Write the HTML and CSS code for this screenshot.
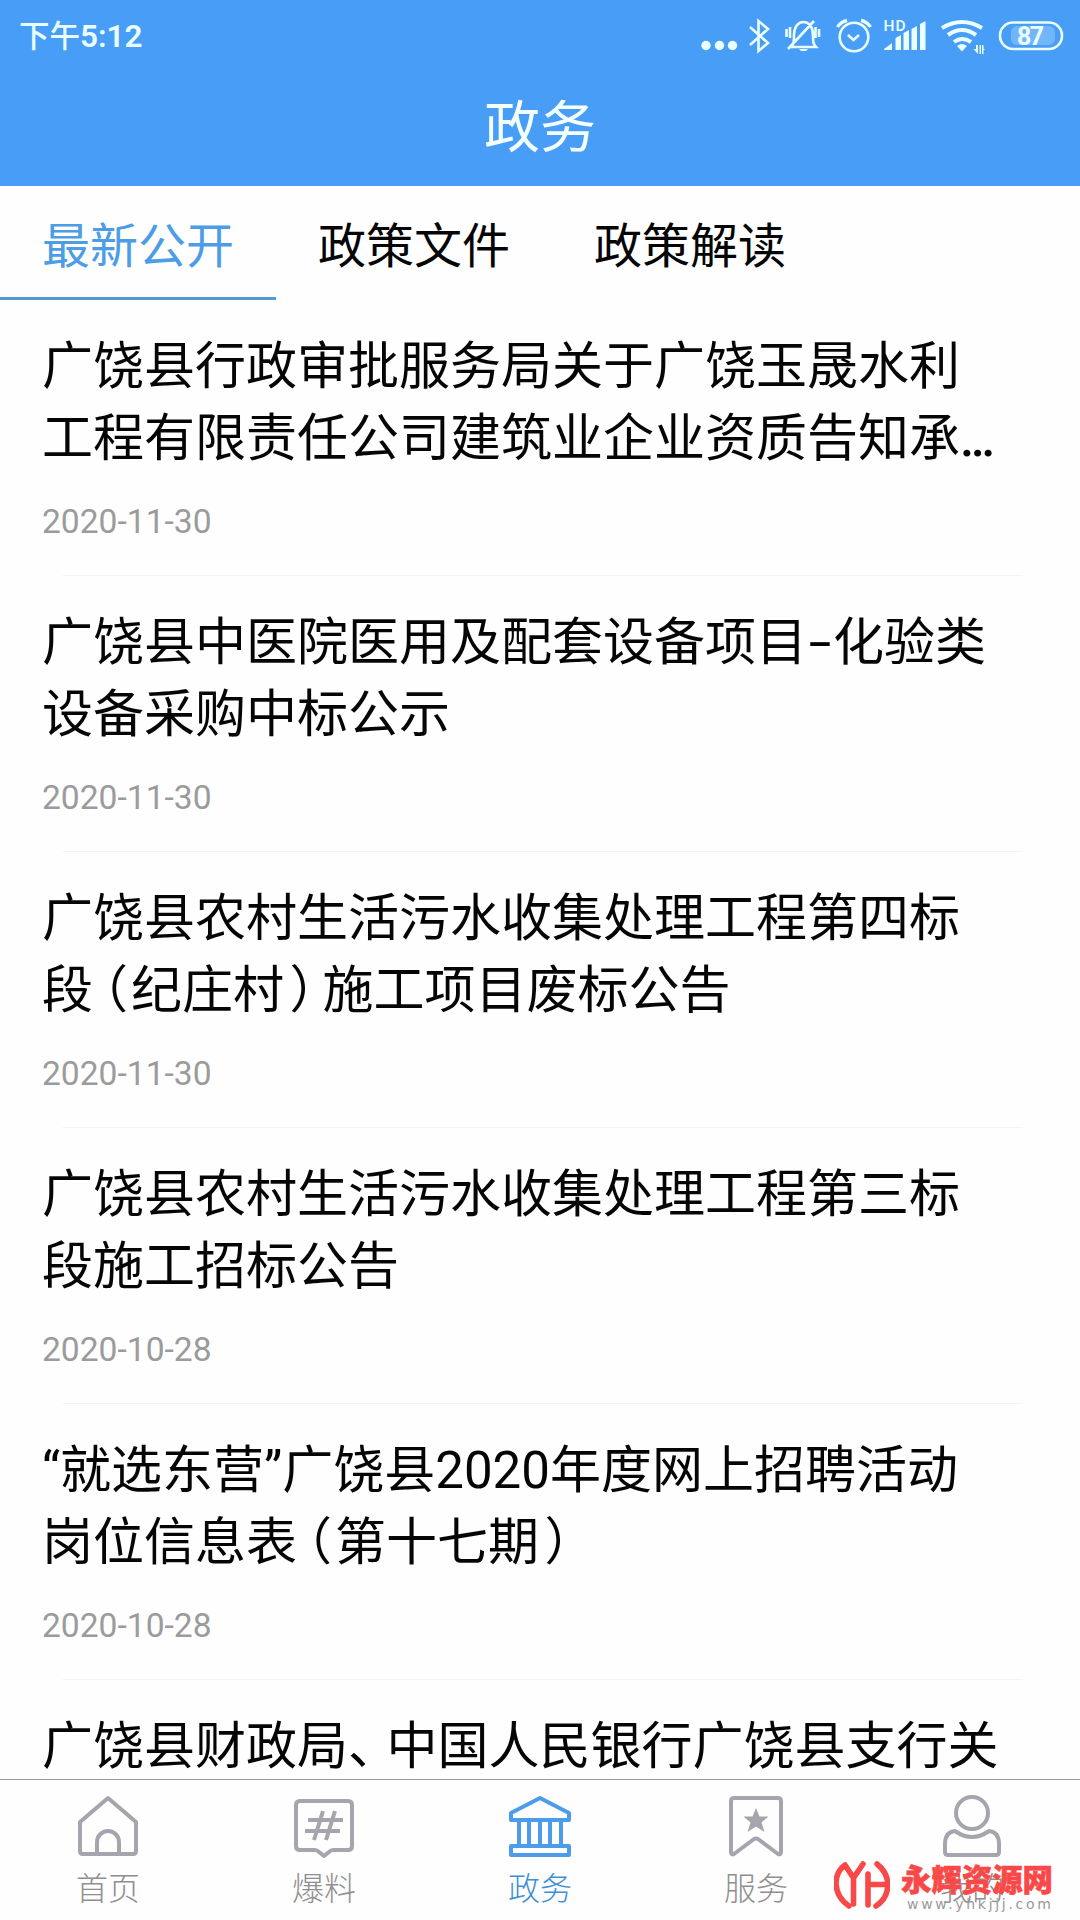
FILE: index.html
```html
<!DOCTYPE html>
<html lang="zh-CN">
<head>
<meta charset="utf-8">
<title>政务</title>
<link rel="stylesheet" href="styles.css">
</head>
<body>
<div class="app">
  <header class="header">
    <div class="status">
      <div class="clock">下午<b>5:12</b></div>
      <svg class="status-icons" viewBox="680 0 400 72" width="400" height="72" fill="none" stroke="#eaffff" stroke-width="2.6">
        <g fill="#eaffff" stroke="none"><circle cx="706" cy="45.500" r="4.700"/><circle cx="719.500" cy="45.500" r="4.700"/><circle cx="732.500" cy="45.500" r="4.700"/></g>
        <path d="M750 27l18 16-9.500 8V21l9.500 8-18 16"/>
        <path d="M791 47c3-3 3-6 3-12 0-8 4-13 9.500-13s9.500 5 9.500 13c0 6 0 9 3 12zM788 49l26-28M786.500 29v8M790 27v11M815.500 27v11M819 29v8"/>
        <path d="M799 49h9l-2 2h-5z" fill="#eaffff" stroke="none"/>
        <circle cx="854" cy="37" r="14.300"/><path d="M848 35l5.500 5 5.500-5" /><path d="M837.500 27q3-5 9.500-6.500M870.500 27q-3-5-9.500-6.500" stroke-width="3.400"/>
        <g fill="#eaffff" stroke="none"><path d="M884 50v-1l8-6v7zM895.500 50V38l5.500-3v15zM903.500 50V33l5.500-3v20zM911.500 50V29l5.500-3v24zM920 50V24l5.500-3v29z"/>
        <path d="M957 46q5-4 10 0l-5 5.500zM976 45h2v9l-4.500-5h2.500zM979.500 54V45h1.500v9zM982 45v9h1.500v-3h-.5l2-2h-1.500v-4z"/></g>
        <path d="M942 28q20-12 40 0M948 35q14-10 28 0M954 42q8-6 17 0" stroke-width="4"/>
        <rect x="1000" y="22.500" width="62" height="26.500" rx="13"/>
        <rect x="1011" y="26" width="44" height="19" rx="6" fill="#8fc5fa" stroke="none" opacity=".6"/>
        <g class="status-text"><text x="883.500" y="31" font-size="15.500" font-weight="500" textLength="22">HD</text><text x="1017" y="45" font-size="25" font-weight="700" textLength="27">87</text></g>
      </svg>
    </div>
    <h1 class="title">政务</h1>
  </header>
  <nav class="tabs">
    <a class="tab tab-active">最新公开</a><a class="tab">政策文件</a><a class="tab">政策解读</a>
  </nav>
  <main class="list">
    <article class="item"><h2>广饶县行政审批服务局关于广饶玉晟水利<br>工程有限责任公司建筑业企业资质告知承<span class="dots">...</span></h2><time>2020-11-30</time></article>
    <article class="item"><h2>广饶县中医院医用及配套设备项目<span class="dash">-</span>化验类<br>设备采购中标公示</h2><time>2020-11-30</time></article>
    <article class="item"><h2>广饶县农村生活污水收集处理工程第四标<br>段<span class="open">（</span>纪庄村<span class="close">）</span>施工项目废标公告</h2><time>2020-11-30</time></article>
    <article class="item"><h2>广饶县农村生活污水收集处理工程第三标<br>段施工招标公告</h2><time>2020-10-28</time></article>
    <article class="item"><h2>“就选东营”广饶县2020年度网上招聘活动<br>岗位信息表<span class="open">（</span>第十七期<span class="close">）</span></h2><time>2020-10-28</time></article>
    <article class="item"><h2>广饶县财政局<span class="comma">、</span>中国人民银行广饶县支行关</h2></article>
  </main>
  <footer class="bottom">
    <a class="nav"><svg viewBox="0 0 64 64" class="icon"><path d="M4 28L32 4l28 24v29q0 3-3 3H7q-3 0-3-3zM21 60V48a11 11 0 0 1 22 0v12"/></svg><span>首页</span></a>
    <a class="nav"><svg viewBox="0 0 64 64" class="icon"><path d="M8 7h48q4 0 4 4v41q0 4-4 4H41q-2 0-4 2l-5 4-5-4q-2-2-4-2H8q-4 0-4-4V11q0-4 4-4z"/><path d="M31 17l-9 29M43 17l-9 29M16 26h35M13 37h35"/></svg><span>爆料</span></a>
    <a class="nav nav-active"><svg viewBox="0 0 64 64" class="icon"><path d="M3 19L32 4l29 15v7H3zM3 52h58v9H3zM11 26v26M21 26v26M32 26v26M42 26v26M53 26v26"/></svg><span>政务</span></a>
    <a class="nav"><svg viewBox="0 0 64 64" class="icon"><path d="M10 4h44q3 0 3 3v51q0 3-3 2L34 45q-2-1-4 0L10 60q-3 1-3-2V7q0-3 3-3z"/><path class="solid" d="M32 14l3.500 8.500h9l-7 6 3 9.500-8.500-5.500-8.500 5.500 3-9.500-7-6h9z"/></svg><span>服务</span></a>
    <a class="nav"><svg viewBox="0 0 64 64" class="icon"><circle cx="32" cy="19" r="16"/><path d="M15 37q17 12 34 0 10 1 10 13v8q0 3-3 3H8q-3 0-3-3v-8q0-12 10-13z"/></svg><span>我的</span></a>
  </footer>
  <div class="watermark">
    <svg viewBox="0 0 56 50" class="mark"><path d="M11 5C-2 15-1 35 15 46M11 5l8.500 13M29 4l-9.500 14v26M34 14v31M34 24.500h19M43 4c15 12 14 32-1 42"/></svg>
    <div class="brand"><strong>永辉资源网</strong><small>www.yhkjjj.com</small></div>
  </div>
</div>
</body>
</html>
```
FILE: styles.css
```css
* { box-sizing: border-box; }
body { margin: 0; background: #fefefe; font-family: Roboto, "Noto Sans CJK SC", sans-serif; color: #050505; }
.app { position: relative; width: 1080px; height: 1920px; overflow: hidden; display: flex; flex-direction: column; }
.header { height: 186px; flex: none; background: #489df6; color: #f4ffff; }
.status { height: 72px; display: flex; justify-content: space-between; }
.clock { padding: 0 0 0 19px; font-size: 30.5px; line-height: 74px; font-weight: 500; color: #eaffff; }
.clock b { font-size: 31.5px; font-weight: 600; }
.status-icons { display: block; }
.status-text { fill: #eaffff; stroke: none; font-family: Roboto, sans-serif; }
.title { margin: 0; text-align: center; font-size: 56px; line-height: 112px; font-weight: 400; }
.tabs { height: 114px; flex: none; display: flex; }
.tab { width: 276px; height: 114px; text-align: center; font-size: 48px; line-height: 121px; }
.tab-active { color: #4c9de5; border-bottom: 3px solid #5899cf; }
.list { flex: 1; min-height: 0; overflow: hidden; }
.item { position: relative; height: 276px; padding: 31px 0 0 42px; }
.item::after { content: ""; position: absolute; left: 63px; right: 57px; bottom: 0; height: 1px; background: #f3f3f3; }
.item h2 { margin: 0; font-size: 51px; line-height: 72px; font-weight: 400; white-space: nowrap; }
.item time { display: block; margin-top: 27px; font-size: 33.6px; line-height: 40px; color: #9b9b9b; }
.dots { font-weight: 500; letter-spacing: -3.5px; }
.open, .close, .comma { font-feature-settings: "halt"; }
.open { margin: 0 3px 0 9.5px; }
.close { margin: 0 7.5px 0 5.5px; }
.comma { margin-right: 13px; }
.dash { display: inline-block; width: 26px; text-align: center; transform: scaleX(1.6); }
.bottom { height: 141px; flex: none; display: flex; border-top: 1px solid #999; background: #fefefe; }
.nav { flex: 1; display: flex; flex-direction: column; align-items: center; padding-top: 14px; color: #8f8f8f; font-size: 32px; line-height: 44px; }
.icon { width: 64px; height: 64px; fill: none; stroke: #a5a5ad; stroke-width: 4; stroke-linejoin: round; }
.icon .solid { fill: #a5a5ad; stroke: none; }
.nav span { margin-top: 9px; font-weight: 300; }
.nav-active { color: #3d8fd8; }
.nav-active .icon { stroke: #4b9cea; }
.watermark { position: absolute; left: 834px; top: 1860px; display: flex; color: #f94848; }
.mark { width: 56px; height: 50px; fill: none; stroke: #f94848; stroke-width: 5.6; stroke-linecap: round; stroke-linejoin: round; }
.brand { display: flex; flex-direction: column; padding-left: 11px; }
.brand strong { font-size: 30.4px; line-height: 36px; height: 36px; padding-top: 3px; font-weight: 900; -webkit-text-stroke: .6px #f94848; }
.brand small { padding-left: 6px; font-family: "DejaVu Sans", sans-serif; font-size: 14px; line-height: 16px; color: #999; letter-spacing: 2.7px; }
```
